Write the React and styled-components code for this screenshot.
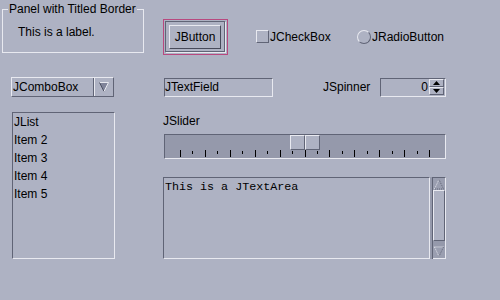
import React from 'react';
import styled, { createGlobalStyle } from 'styled-components';

const BG = '#aeb2c3';
const LIGHT = '#e8e9f0';
const DARK = '#606476';
const TROUGH = '#9599ab';
const PINK = '#b8497f';

const GlobalStyle = createGlobalStyle`
  html, body {
    margin: 0;
    padding: 0;
    background: ${BG};
  }
  body {
    font-family: 'Liberation Sans', Arial, sans-serif;
    font-size: 12px;
    color: #000;
  }
`;

const Screen = styled.div`
  width: 500px;
  height: 300px;
  background: ${BG};
  display: flex;
  flex-direction: column;
  overflow: hidden;
  line-height: 14px;
`;

const Row = styled.div`
  display: flex;
  align-items: flex-start;
  height: ${p => p.$h}px;
  flex: none;
`;

/* titled border panel */
const TitledPanel = styled.fieldset`
  box-sizing: border-box;
  margin: 2px 0 0 2px;
  padding: 0;
  width: 142px;
  height: 51px;
  border: 1px solid ${LIGHT};
  min-inline-size: 0;
`;

const PanelTitle = styled.legend`
  margin-left: 5px;
  padding: 0 1px;
  font-size: 12px;
  line-height: 14px;
  white-space: nowrap;
`;

const PanelLabel = styled.div`
  margin: 9px 0 0 15px;
  white-space: nowrap;
`;

/* button */
const FocusRing = styled.div`
  box-sizing: border-box;
  margin: 19px 0 0 19px;
  width: 65px;
  height: 36px;
  border: 1px solid ${PINK};
  padding: 1px 0 0 1px;
`;

const DefaultFrame = styled.div`
  box-sizing: border-box;
  width: 60px;
  height: 31px;
  border: 1px solid ${DARK};
  box-shadow: 1px 1px 0 ${LIGHT};
  display: flex;
  align-items: center;
  justify-content: center;
`;

const PushButton = styled.button`
  box-sizing: border-box;
  width: 52px;
  height: 24px;
  padding: 0;
  margin: 0;
  font: inherit;
  color: #000;
  background: ${BG};
  border-style: solid;
  border-width: 1px;
  border-color: ${LIGHT} #474a5a #474a5a ${LIGHT};
`;

const Toggle = styled.label`
  display: flex;
  align-items: center;
  margin: 30px 0 0 ${p => p.$left}px;
  width: ${p => p.$w}px;
  height: 13px;
  white-space: nowrap;
`;

const CheckSquare = styled.span`
  box-sizing: border-box;
  width: 13px;
  height: 13px;
  margin-right: 1px;
  border-style: solid;
  border-width: 1px;
  border-color: ${LIGHT} ${DARK} ${DARK} ${LIGHT};
`;

const RadioCircle = styled.span`
  box-sizing: border-box;
  width: 14px;
  height: 14px;
  margin-right: 1px;
  border-radius: 50%;
  border-style: solid;
  border-width: 1px;
  border-color: ${LIGHT} ${DARK} ${DARK} ${LIGHT};
`;

/* combo */
const Combo = styled.div`
  box-sizing: border-box;
  margin-left: 11px;
  width: 103px;
  height: 20px;
  display: flex;
  border-style: solid;
  border-width: 1px;
  border-color: ${LIGHT} ${DARK} ${DARK} ${LIGHT};
`;

const ComboText = styled.div`
  flex: 1;
  padding-left: 1px;
  line-height: 18px;
  border-right: 1px solid ${DARK};
`;

const ComboArrow = styled.div`
  width: 18px;
  border-left: 1px solid ${LIGHT};
  display: flex;
  align-items: center;
  justify-content: center;
`;

const Sunken = styled.div`
  box-sizing: border-box;
  border-style: solid;
  border-width: 1px;
  border-color: ${DARK} ${LIGHT} ${LIGHT} ${DARK};
`;

const TextField = styled(Sunken)`
  margin: 1px 0 0 50px;
  width: 109px;
  height: 19px;
  line-height: 17px;
  white-space: nowrap;
`;

const FieldLabel = styled.div`
  margin: 3px 0 0 50px;
  width: 57px;
`;

const Spinner = styled(Sunken)`
  margin-top: 1px;
  width: 66px;
  height: 19px;
  display: flex;
`;

const SpinValue = styled.div`
  width: 47px;
  text-align: right;
  padding-right: 1px;
  line-height: 17px;
`;

const SpinButtons = styled.div`
  width: 15px;
  display: flex;
  flex-direction: column;
`;

const SpinButton = styled.div`
  box-sizing: border-box;
  height: 8px;
  border-style: solid;
  border-width: 1px;
  border-color: ${LIGHT} ${DARK} ${DARK} ${LIGHT};
  display: flex;
  align-items: center;
  justify-content: center;
`;

/* list */
const List = styled(Sunken)`
  margin-left: 12px;
  width: 103px;
  height: 147px;
  padding-left: 1px;
`;

const ListItem = styled.div`
  line-height: 18px;
  height: 18px;
`;

const RightColumn = styled.div`
  margin-left: 48px;
  display: flex;
  flex-direction: column;
`;

const SliderLabel = styled.div`
  margin-top: 2px;
  line-height: 14px;
`;

const SliderTrack = styled(Sunken)`
  margin: 6px 0 0 1px;
  width: 282px;
  height: 25px;
  background: ${TROUGH};
  display: flex;
  flex-direction: column;
`;

const ThumbRow = styled.div`
  display: flex;
  margin-left: 125px;
`;

const ThumbHalf = styled.div`
  box-sizing: border-box;
  width: 15px;
  height: 15px;
  background: ${BG};
  border-style: solid;
  border-width: 1px;
  border-color: ${LIGHT} ${DARK} ${DARK} ${LIGHT};
`;

const AreaRow = styled.div`
  display: flex;
  margin-top: 18px;
`;

const TextArea = styled(Sunken)`
  width: 267px;
  height: 82px;
  padding: 2px 0 0 1px;
  font-family: 'Liberation Mono', 'Courier New', monospace;
  font-size: 11.7px;
  line-height: 14px;
  white-space: pre;
`;

const ScrollGap = styled.div`
  width: 2px;
  height: 82px;
  background: ${TROUGH};
  border-right: 1px solid ${DARK};
`;

const ScrollBar = styled.div`
  box-sizing: border-box;
  width: 13px;
  height: 82px;
  background: ${TROUGH};
  border-top: 1px solid ${DARK};
  border-right: 1px solid ${LIGHT};
  border-bottom: 1px solid ${LIGHT};
  display: flex;
  flex-direction: column;
`;

const ScrollArrow = styled.div`
  height: 12px;
  background: #9a9eb0;
  display: flex;
`;

const ScrollThumb = styled.div`
  box-sizing: border-box;
  height: 51px;
  margin-bottom: 5px;
  background: ${BG};
  border-style: solid;
  border-width: 1px;
  border-color: ${LIGHT} ${DARK} ${DARK} ${LIGHT};
`;

const DownTriangle = () => (
  <svg width="12" height="12" viewBox="0 0 12 12">
    <polygon points="1.5,1.5 10.5,1.5 6,10.5" fill="#80849a" />
    <line x1="1.5" y1="1.5" x2="10.5" y2="1.5" stroke={LIGHT} />
    <line x1="1.5" y1="1.5" x2="6" y2="10.5" stroke="#4c5062" />
    <line x1="10.5" y1="1.5" x2="6" y2="10.5" stroke={LIGHT} />
  </svg>
);

const SpinTriangle = ({ up }) => (
  <svg width="7" height="4" viewBox="0 0 7 4">
    <polygon points={up ? '3.5,0 7,4 0,4' : '0,0 7,0 3.5,4'} fill="#000" />
  </svg>
);

const DottedArrow = ({ up }) => (
  <svg width="12" height="12" viewBox="0 0 12 12">
    {up ? (
      <>
        <polyline points="1.5,11 6,1.5" fill="none" stroke={LIGHT} strokeDasharray="1 1" />
        <polyline points="6,1.5 10.5,11 1.5,11" fill="none" stroke={DARK} strokeDasharray="1 1" />
      </>
    ) : (
      <>
        <polyline points="1.5,1 10.5,1" fill="none" stroke={LIGHT} strokeDasharray="1 1" />
        <polyline points="1.5,1 6,10.5" fill="none" stroke={LIGHT} strokeDasharray="1 1" />
        <polyline points="10.5,1 6,10.5" fill="none" stroke={DARK} strokeDasharray="1 1" />
      </>
    )}
  </svg>
);

const ticks = Array.from({ length: 21 }, (_, i) => i);

const SliderTicks = () => (
  <svg width="280" height="8" viewBox="0 0 280 8">
    {ticks.map(i => {
      const x = Math.round(15 + i * 12.45) + 0.5;
      const major = i % 2 === 0;
      return (
        <line key={i} x1={x} x2={x} y1={major ? 0 : 1} y2={major ? 7 : 4} stroke="#000" />
      );
    })}
  </svg>
);

const listItems = ['JList', 'Item 2', 'Item 3', 'Item 4', 'Item 5'];

export default function App() {
  return (
    <>
      <GlobalStyle />
      <Screen>
        <Row $h={77}>
          <TitledPanel>
            <PanelTitle>Panel with Titled Border</PanelTitle>
            <PanelLabel>This is a label.</PanelLabel>
          </TitledPanel>
          <FocusRing>
            <DefaultFrame>
              <PushButton>JButton</PushButton>
            </DefaultFrame>
          </FocusRing>
          <Toggle $left={28} $w={101}>
            <CheckSquare />
            JCheckBox
          </Toggle>
          <Toggle $left={0} $w={100}>
            <RadioCircle />
            JRadioButton
          </Toggle>
        </Row>

        <Row $h={35}>
          <Combo>
            <ComboText>JComboBox</ComboText>
            <ComboArrow>
              <DownTriangle />
            </ComboArrow>
          </Combo>
          <TextField>JTextField</TextField>
          <FieldLabel>JSpinner</FieldLabel>
          <Spinner>
            <SpinValue>0</SpinValue>
            <SpinButtons>
              <SpinButton>
                <SpinTriangle up />
              </SpinButton>
              <SpinButton>
                <SpinTriangle />
              </SpinButton>
            </SpinButtons>
          </Spinner>
        </Row>

        <Row $h={188}>
          <List>
            {listItems.map(item => (
              <ListItem key={item}>{item}</ListItem>
            ))}
          </List>
          <RightColumn>
            <SliderLabel>JSlider</SliderLabel>
            <SliderTrack>
              <ThumbRow>
                <ThumbHalf />
                <ThumbHalf />
              </ThumbRow>
              <SliderTicks />
            </SliderTrack>
            <AreaRow>
              <TextArea>This is a JTextArea</TextArea>
              <ScrollGap />
              <ScrollBar>
                <ScrollArrow>
                  <DottedArrow up />
                </ScrollArrow>
                <ScrollThumb />
                <ScrollArrow>
                  <DottedArrow />
                </ScrollArrow>
              </ScrollBar>
            </AreaRow>
          </RightColumn>
        </Row>
      </Screen>
    </>
  );
}
